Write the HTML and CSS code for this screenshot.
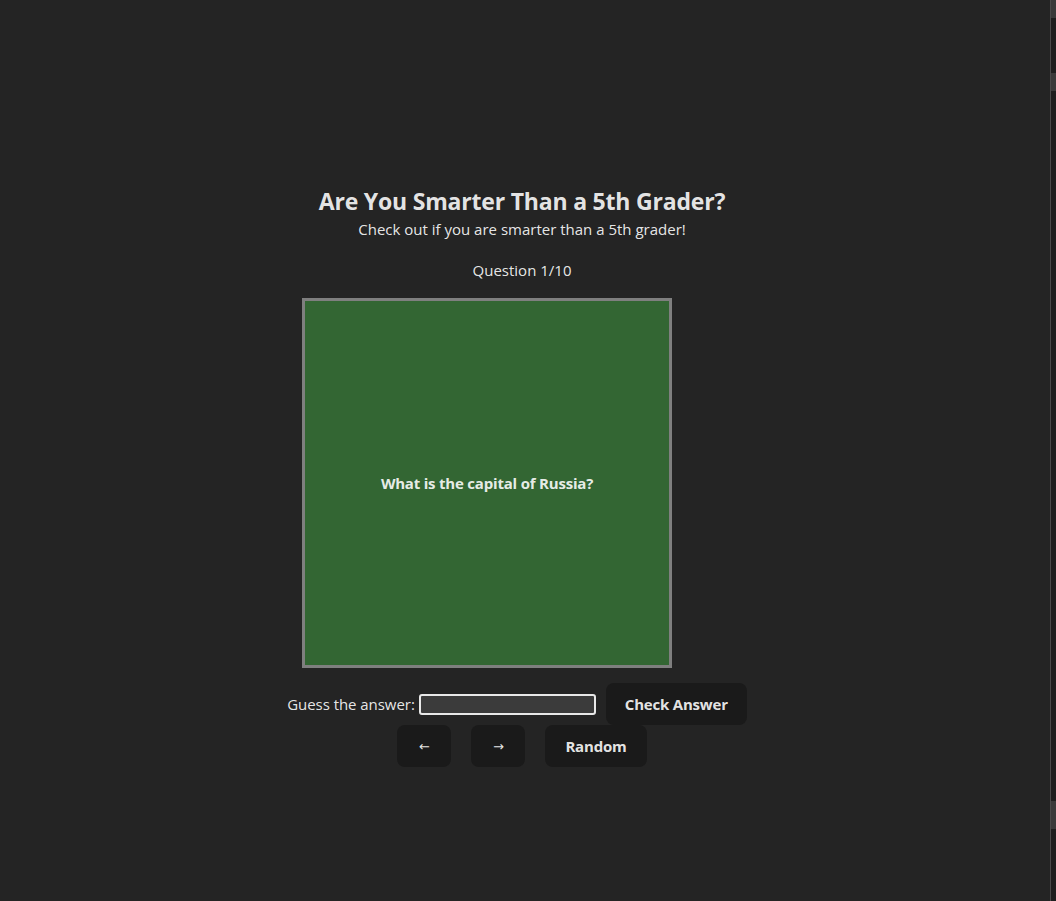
FILE: index.html
```html
<!DOCTYPE html>
<html lang="en">
<head>
<meta charset="UTF-8">
<title>Are You Smarter Than a 5th Grader?</title>
<link rel="stylesheet" href="styles.css">
</head>
<body>
<div class="page">
  <main class="app">
    <h1 class="title">Are You Smarter Than a 5th Grader?</h1>
    <p class="subtitle">Check out if you are smarter than a 5th grader!</p>
    <p class="counter">Question 1/10</p>
    <div class="card-row">
      <div class="card">
        <p class="question">What is the capital of Russia?</p>
      </div>
      <div class="card-spacer"></div>
    </div>
    <form class="guess-row" onsubmit="return false">
      <label class="guess-label" for="guess">Guess the answer:</label>
      <input class="guess-input" id="guess" type="text">
      <button class="btn btn-check" type="submit">Check Answer</button>
    </form>
    <div class="nav-row">
      <button class="btn btn-arrow" type="button">&larr;</button>
      <button class="btn btn-arrow" type="button">&rarr;</button>
      <button class="btn" type="button">Random</button>
    </div>
  </main>
  <aside class="chrome">
    <div class="chrome-line"></div>
    <div class="chrome-track"></div>
  </aside>
</div>
</body>
</html>
```

FILE: styles.css
```css
* { box-sizing: border-box; }

html, body {
  margin: 0;
  padding: 0;
  background: #242424;
}

body {
  font-family: "Open Sans", "Noto Sans", sans-serif;
  font-size: 16px;
  color: rgba(255, 255, 255, 0.9);
}

.page {
  display: flex;
  min-height: 901px;
}

.app {
  flex: 1;
  display: flex;
  flex-direction: column;
  align-items: center;
  justify-content: flex-start;
  padding-top: 186px;
}

.title {
  margin: 0;
  font-size: 23px;
  font-weight: 700;
  line-height: 30px;
  letter-spacing: -0.2px;
}

.subtitle {
  margin: 2px 0 0;
  font-size: 15px;
  line-height: 22px;
}

.counter {
  margin: 19px 0 0;
  font-size: 15px;
  line-height: 22px;
}

.card-row {
  display: flex;
  margin-top: 17px;
}

.card {
  width: 370px;
  height: 370px;
  border: 3px solid #7f7f7f;
  background: #336633;
  display: flex;
  align-items: center;
  justify-content: center;
}

.card-spacer {
  width: 70px;
}

.question {
  margin: 0;
  font-weight: 700;
  font-size: 15px;
  letter-spacing: -0.2px;
}

.guess-row {
  display: flex;
  align-items: center;
  margin: 15px 10px 0 0;
}

.guess-label {
  font-size: 15px;
  letter-spacing: -0.05px;
  margin-right: 4px;
}

.guess-input {
  width: 177px;
  height: 21px;
  border: 2px solid #e8e8e8;
  border-radius: 3px;
  background: #3b3b3b;
  color: #fff;
  margin-right: 10px;
}

.btn {
  height: 42px;
  padding: 0 20px;
  border: none;
  border-radius: 8px;
  background: #1a1a1a;
  color: rgba(255, 255, 255, 0.9);
  font-family: inherit;
  font-size: 15px;
  font-weight: 700;
  letter-spacing: -0.2px;
  cursor: pointer;
}

.btn-check {
  padding: 0 19px;
}

.nav-row {
  display: flex;
  gap: 20px;
}

.btn-arrow {
  width: 54px;
  padding: 0;
  font-family: "DejaVu Sans", sans-serif;
  font-weight: 400;
  font-size: 13px;
  letter-spacing: 0;
}

.chrome {
  width: 12px;
  display: flex;
}

.chrome-line {
  width: 7px;
  border-right: 1px solid #4a4a4a;
  background: #242424;
}

.chrome-track {
  flex: 1;
  background:
    linear-gradient(#3a3a3a, #3a3a3a) 0 0 / 100% 18px no-repeat,
    linear-gradient(#3a3a3a, #3a3a3a) 0 73px / 100% 18px no-repeat,
    linear-gradient(#3a3a3a, #3a3a3a) 0 801px / 100% 28px no-repeat,
    #1e1e1e;
}
```
